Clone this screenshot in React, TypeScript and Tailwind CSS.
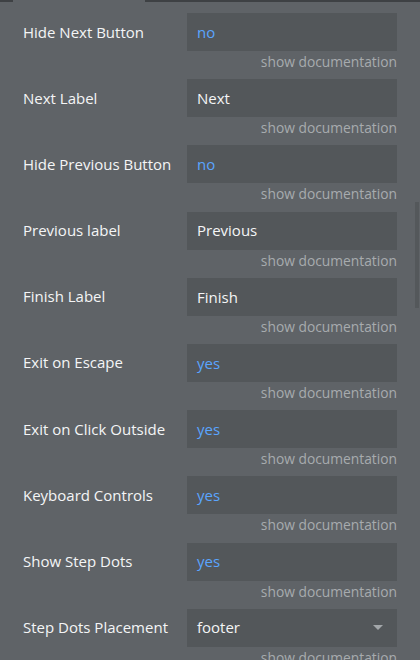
type Field = {
  label: string;
  value: string;
  kind: "bool" | "text" | "select";
};

const fields: Field[] = [
  { label: "Hide Next Button", value: "no", kind: "bool" },
  { label: "Next Label", value: "Next", kind: "text" },
  { label: "Hide Previous Button", value: "no", kind: "bool" },
  { label: "Previous label", value: "Previous", kind: "text" },
  { label: "Finish Label", value: "Finish", kind: "text" },
  { label: "Exit on Escape", value: "yes", kind: "bool" },
  { label: "Exit on Click Outside", value: "yes", kind: "bool" },
  { label: "Keyboard Controls", value: "yes", kind: "bool" },
  { label: "Show Step Dots", value: "yes", kind: "bool" },
  { label: "Step Dots Placement", value: "footer", kind: "select" },
];

const App = () => {
  return (
    <div
      className="relative w-[420px] h-[660px] overflow-hidden bg-[#5f6367]"
      style={{ fontFamily: '"Open Sans", sans-serif' }}
    >
      {/* top tab strip */}
      <div className="flex h-[2px]">
        <div className="w-[13px] bg-[#3e4144]" />
        <div className="w-[132px]" />
        <div className="flex-1 bg-[#3e4144]" />
      </div>

      <div className="pt-[11px]">
        {fields.map((f) => (
          <div key={f.label} className="h-[66.2px]">
            <div className="flex items-center">
              <div className="w-[187px] pl-[23px] text-[15px] leading-[20px] -mt-[1px] text-[#f4f5f6]">
                {f.label}
              </div>
              <div className="relative w-[210px] h-[38px] bg-[#53575a] flex items-center pl-[10px] text-[15px]">
                <span
                  className={
                    f.kind === "bool" ? "text-[#5aa5ff]" : "text-[#f4f5f6]"
                  }
                >
                  {f.value}
                </span>
                {f.kind === "select" && (
                  <div className="absolute right-[14px] top-[16px] w-0 h-0 border-l-[5px] border-r-[5px] border-t-[5px] border-l-transparent border-r-transparent border-t-[#a3a7aa]" />
                )}
              </div>
            </div>
            <div className="w-[397px] text-right text-[13.8px] leading-[22px] text-[#a7abae]">
              show documentation
            </div>
          </div>
        ))}
      </div>

      {/* scrollbar */}
      <div className="absolute right-[1px] top-[202px] w-[4px] h-[106px] bg-[#54585b]" />
    </div>
  );
};

export default App;
